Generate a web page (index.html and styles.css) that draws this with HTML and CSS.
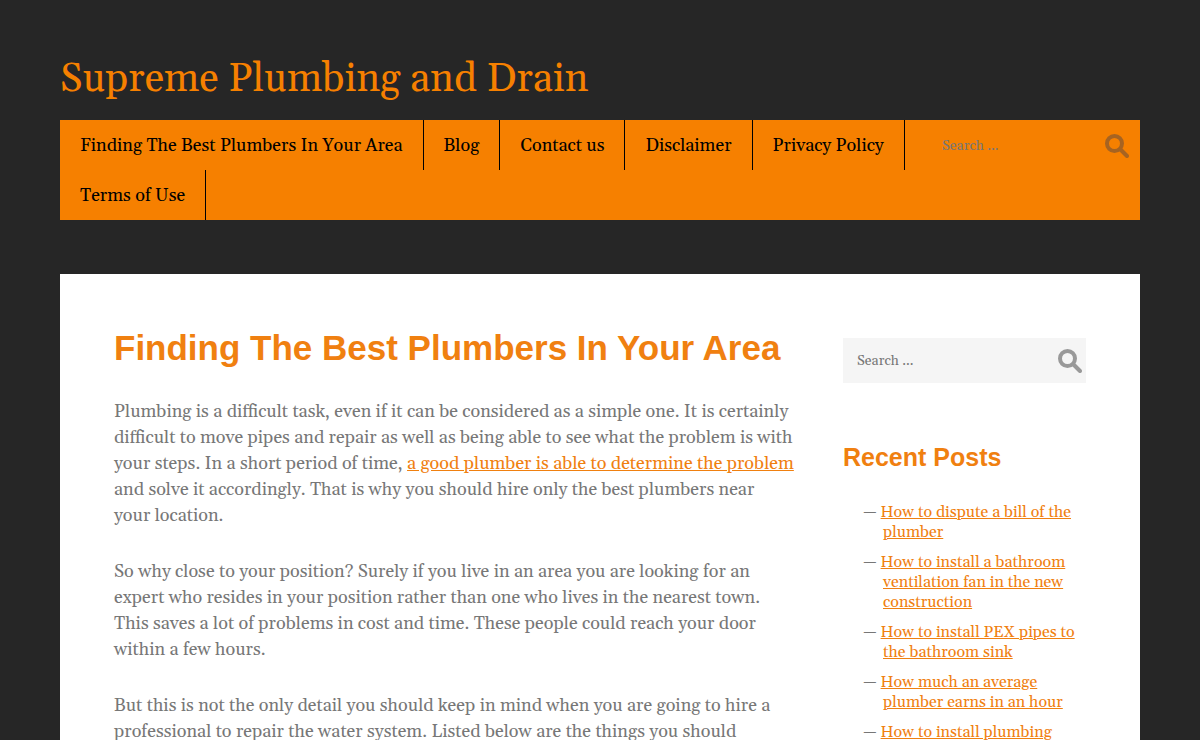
FILE: index.html
```html
<!DOCTYPE html>
<html lang="en">
<head>
<meta charset="utf-8">
<meta name="viewport" content="width=device-width, initial-scale=1">
<title>Supreme Plumbing and Drain</title>
<link rel="stylesheet" href="styles.css">
</head>
<body>
<div class="site">
  <header class="site-header">
    <p class="site-title"><a href="#">Supreme Plumbing and Drain</a></p>
    <div class="nav-bar">
      <nav class="nav" aria-label="Primary">
        <ul class="nav-list">
          <li><a href="#">Finding The Best Plumbers In Your Area</a></li>
          <li><a href="#">Blog</a></li>
          <li><a href="#">Contact us</a></li>
          <li><a href="#">Disclaimer</a></li>
          <li><a href="#">Privacy Policy</a></li>
          <li><a href="#">Terms of Use</a></li>
        </ul>
      </nav>
      <form class="search search-nav" role="search">
        <input class="search-field" type="search" placeholder="Search ..." aria-label="Search the site">
        <button class="search-button" type="submit" aria-label="Search">
          <svg class="search-icon" viewBox="0 0 24 24"><circle cx="9.5" cy="9.5" r="7.5" fill="none" stroke="currentColor" stroke-width="4"/><path d="M15.5 15.5L22 22" stroke="currentColor" stroke-width="4" stroke-linecap="round"/></svg>
        </button>
      </form>
    </div>
  </header>
  <div class="content">
    <main class="main">
      <h1 class="entry-title">Finding The Best Plumbers In Your Area</h1>
      <p>Plumbing is a difficult task, even if it can be considered as a simple one. It is certainly difficult to move pipes and repair as well as being able to see what the problem is with your steps. In a short period of time, <a href="#">a good plumber is able to determine the problem</a> and solve it accordingly. That is why you should hire only the best plumbers near your location.</p>
      <p>So why close to your position? Surely if you live in an area you are looking for an expert who resides in your position rather than one who lives in the nearest town. This saves a lot of problems in cost and time. These people could reach your door within a few hours.</p>
      <p>But this is not the only detail you should keep in mind when you are going to hire a professional to repair the water system. Listed below are the things you should</p>
    </main>
    <aside class="sidebar">
      <form class="search search-side" role="search">
        <input class="search-field" type="search" placeholder="Search ..." aria-label="Search posts">
        <button class="search-button" type="submit" aria-label="Search">
          <svg class="search-icon" viewBox="0 0 24 24"><circle cx="9.5" cy="9.5" r="7.5" fill="none" stroke="currentColor" stroke-width="4"/><path d="M15.5 15.5L22 22" stroke="currentColor" stroke-width="4" stroke-linecap="round"/></svg>
        </button>
      </form>
      <h2 class="widget-title">Recent Posts</h2>
      <ul class="posts">
        <li><a href="#">How to dispute a bill of the plumber</a></li>
        <li><a href="#">How to install a bathroom ventilation fan in the new construction</a></li>
        <li><a href="#">How to install PEX pipes to the bathroom sink</a></li>
        <li><a href="#">How much an average plumber earns in an hour</a></li>
        <li><a href="#">How to install plumbing</a></li>
      </ul>
    </aside>
  </div>
</div>
</body>
</html>
```
FILE: styles.css
```css
* { box-sizing: border-box; }
html { scrollbar-width: none; }
body {
  margin: 0;
  background: #262626;
  color: #777;
  font: 18px/26px Georgia, Gelasio, "Liberation Serif", serif;
}
a { color: #f08010; }
.site { width: 90%; max-width: 1080px; margin: 0 auto; padding-top: 54px; }
.site-title { margin: 0 0 14px; font-size: 40px; line-height: 52px; }
.site-title a { color: #f68000; text-decoration: none; }
.nav-bar {
  display: flex;
  align-items: flex-start;
  margin-bottom: 54px;
  background: #f68000;
}
.nav { flex: 1; }
.nav-list { display: flex; flex-wrap: wrap; margin: 0; padding: 0; list-style: none; }
.nav-list a {
  display: block;
  height: 50px;
  padding: 0 20px;
  border-right: 1px solid #000;
  color: #000;
  line-height: 52px;
  text-decoration: none;
}
.search { display: flex; align-items: center; }
.search-field {
  flex: 1;
  min-width: 0;
  height: 44px;
  padding: 0 14px;
  border: 0;
  background: transparent;
  color: #777;
  font: inherit;
  font-size: 14px;
}
.search-field::placeholder { color: #777; opacity: 1; }
.search-button { display: flex; padding: 4px; border: 0; background: transparent; color: #999; cursor: pointer; }
.search-icon { width: 24px; height: 24px; }
.search-nav { width: 212px; height: 52px; padding-right: 7px; }
.search-nav .search-button { color: #a66321; }
.search-side { height: 45px; margin-bottom: 54px; background: #f5f5f5; }
.content {
  display: grid;
  grid-template-columns: 70% 25%;
  justify-content: space-between;
  padding: 54px;
  background: #fff;
}
.main p { margin: 0 0 30px; }
.entry-title, .widget-title { color: #f08010; font-family: "Liberation Sans", Arial, sans-serif; }
.entry-title { margin: 0 0 31px; font-size: 35px; line-height: 40px; }
.sidebar { padding-top: 10px; }
.widget-title { margin: 0 0 25px; font-size: 25px; line-height: 40px; }
.posts { margin: 0; padding: 0 0 0 40px; list-style: none; font-size: 16px; line-height: 20px; }
.posts li { margin-bottom: 10px; text-indent: -20px; }
.posts li::before { content: "— "; }
```
